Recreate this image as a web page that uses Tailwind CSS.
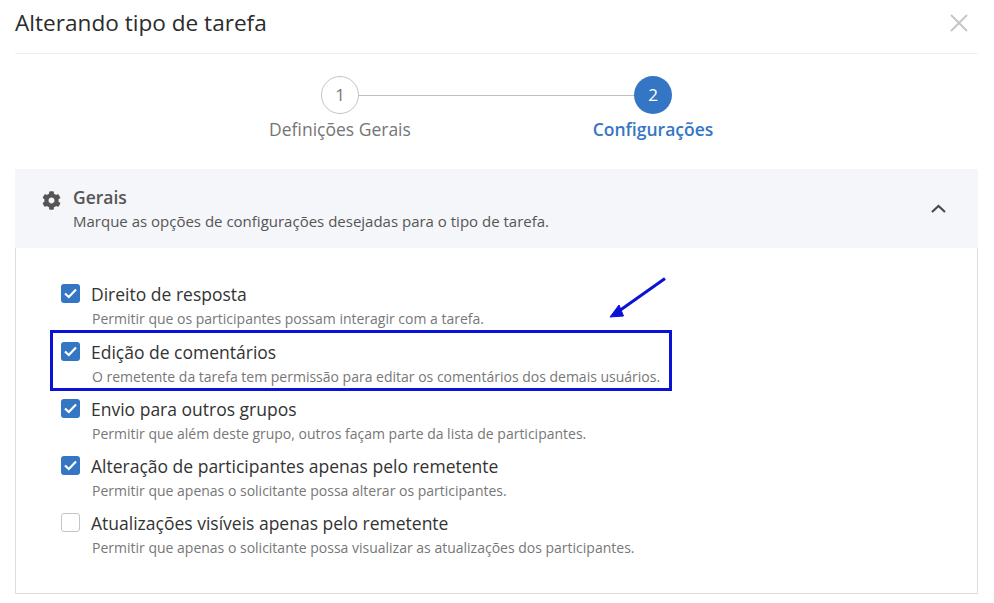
<!DOCTYPE html>
<html lang="pt-BR">
<head>
  <meta charset="UTF-8" />
  <title>Alterando tipo de tarefa</title>
  <script src="https://cdn.jsdelivr.net/npm/@tailwindcss/browser@4"></script>
</head>
<body class="relative w-[994px] h-[603px] overflow-hidden bg-white font-['Open_Sans',sans-serif]">
  <div class="pl-[15px] pr-[16px]">
    <!-- Cabecalho -->
    <div class="flex items-center justify-between h-[54px] pb-[8px] border-b border-[#f0f0f2]">
      <h1 class="text-[22.6px] text-[#2b2b2b]">Alterando tipo de tarefa</h1>
      <svg class="mr-[10px]" width="18" height="18" viewBox="0 0 18 18" fill="none" stroke="#c6c6c6" stroke-width="2"><path d="M1 1 L17 17 M17 1 L1 17" /></svg>
    </div>

    <!-- Passos -->
    <div class="relative h-[115px]">
      <div class="absolute left-[343px] top-[41px] w-[277px] h-px bg-[#bdbdc2]"></div>
      <div class="absolute left-[225px] top-[22px] w-[200px] flex flex-col items-center">
        <div class="w-[38px] h-[38px] rounded-full border border-[#c4c4c4] bg-white flex items-center justify-center text-[17px] text-[#777]">1</div>
        <span class="mt-[1px] text-[17.5px] leading-[28px] text-[#757575]">Definições Gerais</span>
      </div>
      <div class="absolute left-[538px] top-[22px] w-[200px] flex flex-col items-center">
        <div class="w-[38px] h-[38px] rounded-full bg-[#3576c4] flex items-center justify-center text-[17px] text-white">2</div>
        <span class="mt-[1px] text-[17.5px] leading-[28px] font-semibold text-[#3576c4]">Configurações</span>
      </div>
    </div>

    <!-- Painel -->
    <div class="h-[79px] bg-[#f5f6fa] flex items-center pl-[27px] pr-[32px]">
      <svg class="w-[19px] h-[19px] mb-[17px]" viewBox="0 0 512 512" fill="#555"><path d="M487.4 315.7l-42.6-24.6c4.3-23.2 4.3-47 0-70.2l42.6-24.6c4.9-2.8 7.1-8.6 5.5-14-11.1-35.6-30-67.8-54.7-94.6-3.8-4.1-10-5.1-14.8-2.3L380.8 110c-17.9-15.4-38.5-27.3-60.8-35.1V25.8c0-5.6-3.9-10.5-9.4-11.7-36.7-8.2-74.3-7.8-109.2 0-5.5 1.2-9.4 6.1-9.4 11.7V75c-22.2 7.9-42.8 19.8-60.8 35.1L88.7 85.5c-4.9-2.8-11-1.9-14.8 2.3-24.7 26.7-43.6 58.9-54.7 94.6-1.7 5.4.6 11.2 5.5 14L67.3 221c-4.3 23.2-4.3 47 0 70.2l-42.6 24.6c-4.9 2.8-7.1 8.6-5.5 14 11.1 35.6 30 67.8 54.7 94.6 3.8 4.1 10 5.1 14.8 2.3l42.6-24.6c17.9 15.4 38.5 27.3 60.8 35.1v49.2c0 5.6 3.9 10.5 9.4 11.7 36.7 8.2 74.3 7.8 109.2 0 5.5-1.2 9.4-6.1 9.4-11.7v-49.2c22.2-7.9 42.8-19.8 60.8-35.1l42.6 24.6c4.9 2.8 11 1.9 14.8-2.3 24.7-26.7 43.6-58.9 54.7-94.6 1.5-5.5-.7-11.3-5.6-14.1zM256 336c-44.1 0-80-35.9-80-80s35.9-80 80-80 80 35.9 80 80-35.9 80-80 80z" /></svg>
      <div class="ml-[12px] flex-1 pt-[2px]">
        <div class="text-[17.5px] leading-[22px] font-semibold text-[#555]">Gerais</div>
        <div class="mt-[1px] text-[15px] leading-[24px] text-[#555]">Marque as opções de configurações desejadas para o tipo de tarefa.</div>
      </div>
      <svg width="15" height="9" viewBox="0 0 15 9" fill="none" stroke="#4a4a4a" stroke-width="2.2"><path d="M1 8 L7.5 2 L14 8" /></svg>
    </div>
    <div class="h-[346px] border border-t-0 border-[#dedede] pl-[45px] pt-[32.4px] flex flex-col gap-[3.2px]">
      <div class="flex gap-[11px] h-[54px]">
        <span class="mt-[4px] w-[19px] h-[19px] rounded-[3px] bg-[#3576c4] flex items-center justify-center shrink-0"><svg width="13" height="11" viewBox="0 0 13 11" fill="none" stroke="#fff" stroke-width="2.2"><path d="M1 5.5 L4.8 9 L12 1.5" /></svg></span>
        <div>
          <div class="text-[17.5px] leading-[28px] text-[#333]">Direito de resposta</div>
          <div class="mt-px ml-px text-[14px] leading-[20px] text-[#777]">Permitir que os participantes possam interagir com a tarefa.</div>
        </div>
      </div>
      <div class="flex gap-[11px] h-[54px]">
        <span class="mt-[4px] w-[19px] h-[19px] rounded-[3px] bg-[#3576c4] flex items-center justify-center shrink-0"><svg width="13" height="11" viewBox="0 0 13 11" fill="none" stroke="#fff" stroke-width="2.2"><path d="M1 5.5 L4.8 9 L12 1.5" /></svg></span>
        <div>
          <div class="text-[17.5px] leading-[28px] text-[#333]">Edição de comentários</div>
          <div class="mt-px ml-px text-[14px] leading-[20px] text-[#777]">O remetente da tarefa tem permissão para editar os comentários dos demais usuários.</div>
        </div>
      </div>
      <div class="flex gap-[11px] h-[54px]">
        <span class="mt-[4px] w-[19px] h-[19px] rounded-[3px] bg-[#3576c4] flex items-center justify-center shrink-0"><svg width="13" height="11" viewBox="0 0 13 11" fill="none" stroke="#fff" stroke-width="2.2"><path d="M1 5.5 L4.8 9 L12 1.5" /></svg></span>
        <div>
          <div class="text-[17.5px] leading-[28px] text-[#333]">Envio para outros grupos</div>
          <div class="mt-px ml-px text-[14px] leading-[20px] text-[#777]">Permitir que além deste grupo, outros façam parte da lista de participantes.</div>
        </div>
      </div>
      <div class="flex gap-[11px] h-[54px]">
        <span class="mt-[4px] w-[19px] h-[19px] rounded-[3px] bg-[#3576c4] flex items-center justify-center shrink-0"><svg width="13" height="11" viewBox="0 0 13 11" fill="none" stroke="#fff" stroke-width="2.2"><path d="M1 5.5 L4.8 9 L12 1.5" /></svg></span>
        <div>
          <div class="text-[17.5px] leading-[28px] text-[#333]">Alteração de participantes apenas pelo remetente</div>
          <div class="mt-px ml-px text-[14px] leading-[20px] text-[#777]">Permitir que apenas o solicitante possa alterar os participantes.</div>
        </div>
      </div>
      <div class="flex gap-[11px] h-[54px]">
        <span class="mt-[4px] w-[19px] h-[19px] rounded-[3px] bg-white border border-[#c4c4c4] shrink-0"></span>
        <div>
          <div class="text-[17.5px] leading-[28px] text-[#333]">Atualizações visíveis apenas pelo remetente</div>
          <div class="mt-px ml-px text-[14px] leading-[20px] text-[#777]">Permitir que apenas o solicitante possa visualizar as atualizações dos participantes.</div>
        </div>
      </div>
    </div>
  </div>

  <!-- Destaque sobre a imagem -->
  <div class="absolute left-[50px] top-[330px] w-[622px] h-[61px] border-[3px] border-[#0a12d6]"></div>
  <svg class="absolute left-[605px] top-[273px]" width="65" height="50" viewBox="0 0 65 50" fill="#0a12d6" stroke="#0a12d6"><path d="M60 5.5 L14 38" stroke-width="3" /><path d="M5 44 L14 32 L18.5 43 Z" stroke-width="1" /></svg>
</body>
</html>
